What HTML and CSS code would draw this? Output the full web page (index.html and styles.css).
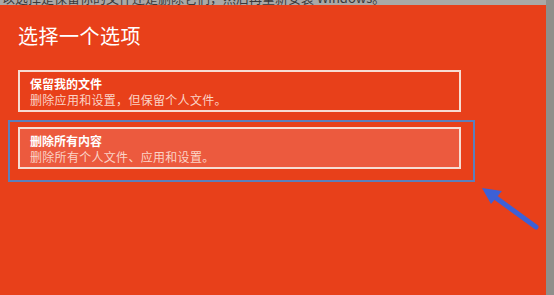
FILE: index.html
```html
<!DOCTYPE html>
<html lang="zh-CN">
<head>
    <meta charset="UTF-8">
    <title>选择一个选项</title>
    <link rel="stylesheet" href="styles.css">
</head>
<body>
    <div class="screen">
        <div class="topline">
            <span>以选择是保留你的文件还是删除它们，然后再重新安装 Windows。</span>
        </div>
        <div class="panel">
            <h1>选择一个选项</h1>
            <div class="option">
                <div class="option-title">保留我的文件</div>
                <div class="option-desc">删除应用和设置，但保留个人文件。</div>
            </div>
            <div class="highlight">
                <div class="option selected">
                    <div class="option-title">删除所有内容</div>
                    <div class="option-desc">删除所有个人文件、应用和设置。</div>
                </div>
            </div>
        </div>
        <svg class="arrow" width="80" height="60" viewBox="0 0 80 60">
            <path d="M58 45 L14 13" stroke="#3d60d6" stroke-width="5" stroke-linecap="round"/>
            <polygon points="4,6 24,9 13,22" fill="#3d60d6"/>
        </svg>
    </div>
</body>
</html>
```

FILE: styles.css
```css
body {
    margin: 0;
    background-color: #8f8f8b;
    font-family: "Noto Sans CJK SC", "Noto Sans", sans-serif;
}

.screen {
    position: relative;
    width: 554px;
    height: 295px;
    overflow: hidden;
}

.topline {
    height: 5px;
    width: 546px;
    overflow: hidden;
    background-color: #a9a9a6;
}

.topline span {
    display: block;
    margin-top: -9px;
    padding-left: 2px;
    font-size: 13px;
    line-height: 14px;
    color: #3a3a3a;
}

.panel {
    width: 546px;
    height: 290px;
    box-sizing: border-box;
    padding-left: 18px;
    background-color: #e8401a;
    color: #ffffff;
}

h1 {
    margin: 0;
    padding-top: 19px;
    font-size: 20px;
    line-height: 24px;
    font-weight: 400;
    letter-spacing: 0.5px;
    margin-bottom: 22px;
}

.option {
    width: 443px;
    box-sizing: border-box;
    padding: 4px 12px 2px 10px;
    border: 2px solid #f7dcd2;
}

.option-title {
    font-size: 12px;
    line-height: 16px;
    font-weight: 700;
}

.option-desc {
    font-size: 12px;
    line-height: 16px;
    letter-spacing: 0.3px;
    color: #fbd3c6;
}

.highlight {
    width: 467px;
    box-sizing: border-box;
    margin-top: 8px;
    margin-left: -10px;
    padding: 5px 12px 11px 8px;
    border: 2px solid #5c7fbb;
}

.selected {
    background-color: #ec5a3e;
}

.arrow {
    position: absolute;
    left: 478px;
    top: 182px;
}
```
